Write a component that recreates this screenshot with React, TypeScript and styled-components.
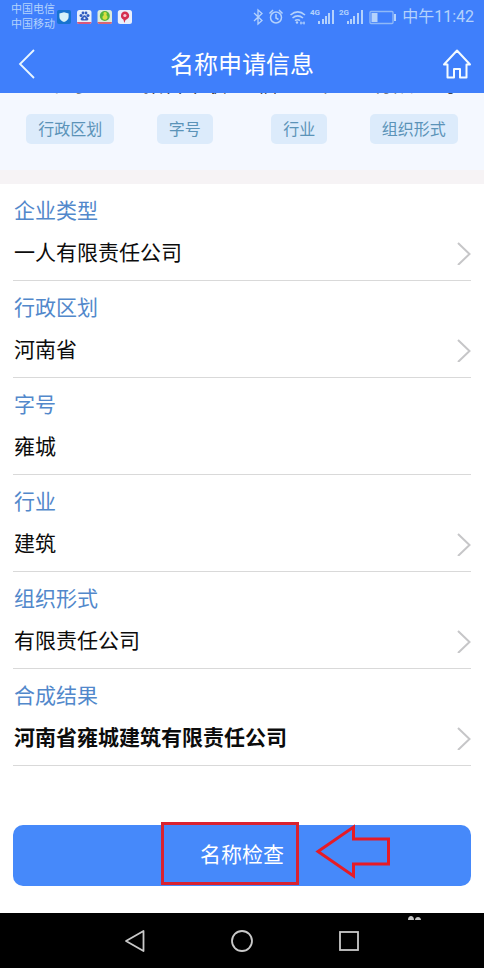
import React, { useState } from 'react';
import styled, { createGlobalStyle } from 'styled-components';

const GlobalStyle = createGlobalStyle`
  *, *::before, *::after { box-sizing: border-box; }
  body {
    margin: 0;
    background: #fff;
    font-family: Roboto, "Noto Sans CJK SC", sans-serif;
  }
  button, input {
    font: inherit;
    color: inherit;
    border: 0;
    padding: 0;
    background: none;
  }
  button { cursor: pointer; }
`;

const Page = styled.div`
  display: flex;
  flex-direction: column;
  min-height: 100vh;
  background: #fff;
`;

const Header = styled.header`
  background: #3f7ffb;
  color: #fff;
`;

const StatusBar = styled.div`
  display: flex;
  align-items: center;
  justify-content: space-between;
  height: 34px;
  padding: 0 10px 0 11px;
  color: #b4d2fc;
`;

const StatusGroup = styled.div<{ $gap: number }>`
  display: flex;
  align-items: center;
  gap: ${(p) => p.$gap}px;
`;

const Carriers = styled.div`
  font-size: 11px;
  line-height: 15px;
  margin-right: -4px;
`;

const Clock = styled.time`
  font-size: 16px;
  line-height: 24px;
  margin-left: 3px;
`;

const TitleBar = styled.div`
  display: grid;
  grid-template-columns: 32px 1fr 32px;
  align-items: center;
  height: 59px;
  padding: 0 11px;
`;

const Title = styled.h1`
  margin: 0;
  padding-top: 2px;
  font-size: 24px;
  line-height: 36px;
  font-weight: 400;
  text-align: center;
`;

const IconButton = styled.button`
  display: flex;
  align-items: center;
  justify-content: center;
  height: 40px;
`;

const Summary = styled.section`
  display: grid;
  grid-template-columns: repeat(4, 1fr);
  justify-items: center;
  row-gap: 19px;
  padding: 0 13px 26px;
  background: #f4f8ff;
  border-bottom: 14px solid #f6f3f5;
`;

const SampleWord = styled.div`
  display: flex;
  align-items: flex-end;
  height: 2px;
  overflow: hidden;
  font-size: 21px;
  line-height: 22px;
  color: #111;
  white-space: nowrap;
`;

const Chip = styled.span`
  height: 30px;
  padding: 1px 12px 0;
  border-radius: 5px;
  background: #dcebfb;
  color: #5b93b8;
  font-size: 16px;
  line-height: 30px;
`;

const Form = styled.form`
  flex: 1;
  padding: 0 13px 27px;
`;

const Field = styled.div`
  height: 97px;
  padding: 11px 0 0 1px;
  border-bottom: 1px solid #d9d9d9;
  font-size: 21px;
`;

const FieldLabel = styled.label`
  display: block;
  line-height: 32px;
  color: #5288cb;
`;

const valueStyle = `
  width: 100%;
  height: 32px;
  line-height: 32px;
  color: #0c0c0c;
  text-align: left;
`;

const ValueButton = styled.button<{ $bold?: boolean }>`
  ${valueStyle}
  display: flex;
  align-items: center;
  justify-content: space-between;
  margin-top: 10px;
  font-weight: ${(p) => (p.$bold ? 700 : 400)};
`;

const ValueInput = styled.input`
  ${valueStyle}
  display: block;
  margin-top: 10px;
  outline: none;
`;

const SubmitArea = styled.div`
  position: relative;
  margin-top: 59px;
`;

const SubmitButton = styled.button`
  display: block;
  width: 100%;
  height: 61px;
  border-radius: 10px;
  background: #4689fa;
  color: #fff;
  font-size: 21px;
  line-height: 61px;
`;

const Highlight = styled.svg`
  position: absolute;
  top: -4px;
  left: calc(50% - 82px);
  pointer-events: none;
`;

const SystemNav = styled.nav`
  position: relative;
  display: flex;
  justify-content: center;
  height: 55px;
  background: #000;
`;

const NavButton = styled.button`
  display: flex;
  align-items: center;
  justify-content: center;
  width: 107px;
`;

const Mark = styled.svg`
  position: absolute;
  top: 3px;
  right: 62px;
`;

const Chevron = () => (
  <svg width="14" height="24" viewBox="0 0 14 24" fill="none" stroke="#c6c6c8" strokeWidth="2" aria-hidden="true">
    <path d="M1 2 12.5 13 1 24" />
  </svg>
);

const AppBadges = () => (
  <svg width="76" height="16" viewBox="0 0 76 16" aria-hidden="true">
    <rect x="0" y="1" width="14" height="14" rx="2" fill="#1773cf" />
    <path d="M7 3.2 11.6 4.6V8c0 2.500-2 4-4.600 5C4.400 12 2.400 10.500 2.400 8V4.600Z" fill="#d5f2fa" />
    <rect x="20" y="1" width="14.500" height="14" rx="2.500" fill="#e7effb" />
    <g fill="#315bc0">
      <circle cx="24" cy="6.500" r="1.500" /><circle cx="26" cy="4" r="1.400" />
      <circle cx="29" cy="4" r="1.400" /><circle cx="31" cy="6.500" r="1.500" />
      <path d="M27.500 6.300c1.500 0 2 1.500 3.400 2.600 1 1 .4 2.600-1 2.600h-4.800c-1.400 0-2-1.600-1-2.600 1.400-1.100 1.900-2.600 3.400-2.600Z" />
    </g>
    <circle cx="27.500" cy="9.200" r="1" fill="#e7effb" />
    <path d="M20 13h14.500a2 2 0 0 1-2 2H22a2 2 0 0 1-2-2Z" fill="#d8577c" />
    <rect x="40.500" y="1" width="14.500" height="14" rx="2.500" fill="#dcebdc" />
    <circle cx="47.800" cy="7" r="5" fill="#55b43c" />
    <path d="M48 3c1.800 0 2.300 1.800 1.300 3 1.500.8 1.800 3.500-.3 4.500-2 .8-4-.5-3.500-2.500.2-1 .8-1.500 1.500-2C46 4.800 46.300 3 48 3Z" fill="#d9df43" />
    <path d="M40.500 13H55a2 2 0 0 1-2 2H42.500a2 2 0 0 1-2-2Z" fill="#d96473" />
    <rect x="60.800" y="1" width="14.200" height="14" rx="2.500" fill="#e9effb" />
    <path d="M67.900 2.500a4.300 4.300 0 0 1 4.300 4.300c0 2-1.700 3.600-3.700 4.100L67.300 14l-.8-3.300a4.300 4.300 0 0 1 1.400-8.200Z" fill="#d52f50" />
    <circle cx="67.900" cy="6.500" r="1.600" fill="#f3cbd9" />
  </svg>
);

const StatusIcons = () => (
  <svg width="144" height="20" viewBox="0 0 144 20" fill="none" stroke="#b4d2fc" strokeWidth="1.300" aria-hidden="true">
    <path d="M1 6 9 13.500 5 17V3l4 3.500L1 14" />
    <circle cx="23" cy="10.500" r="5.500" strokeWidth="1.500" />
    <path d="M23 7v4l2.500 1.500M16.500 6.500l3.500-3.500M29.500 6.500l-3.500-3.500" strokeWidth="1.500" />
    <path d="M37.500 8c4.500-3.800 10-3.800 14.500 0M39.500 11c3.300-2.700 7.200-2.700 10.500 0M42 13.700c1.600-1.200 3.500-1.200 5 0" strokeWidth="1.600" />
    <circle cx="44" cy="15.500" r="1.200" fill="#b4d2fc" stroke="none" />
    <path d="M47 16h5M48 14.500v3M51 14.500v3" strokeWidth="1" />
    <g fill="#b4d2fc" stroke="none" fontFamily="Roboto, sans-serif" fontSize="8" fontWeight="700">
      <text x="57" y="8">4G</text>
      <text x="86" y="8">2G</text>
      <rect x="65" y="14" width="2" height="3" /><rect x="69" y="12" width="2" height="5" />
      <rect x="72" y="9" width="2" height="8" /><rect x="75" y="6" width="2" height="11" />
      <rect x="79" y="3" width="2" height="14" />
      <rect x="94" y="14" width="2" height="3" /><rect x="97" y="12" width="2" height="5" />
      <rect x="100" y="9" width="2" height="8" /><rect x="104" y="6" width="2" height="11" />
      <rect x="108" y="3" width="2" height="14" />
      <rect x="118.500" y="6" width="6" height="9" /><rect x="141" y="7" width="2" height="7" />
    </g>
    <rect x="117" y="4.500" width="23" height="12" rx="1" stroke="#8fb9f7" />
  </svg>
);

const samples = [
  { word: '北京', part: '行政区划' },
  { word: '拓普华联', part: '字号' },
  { word: '信息工程', part: '行业' },
  { word: '有限公司', part: '组织形式' },
];

type FieldData = { id: string; label: string; value: string; editable?: boolean; bold?: boolean };

const fields: FieldData[] = [
  { id: 'type', label: '企业类型', value: '一人有限责任公司' },
  { id: 'region', label: '行政区划', value: '河南省' },
  { id: 'name', label: '字号', value: '雍城', editable: true },
  { id: 'industry', label: '行业', value: '建筑' },
  { id: 'form', label: '组织形式', value: '有限责任公司' },
  { id: 'result', label: '合成结果', value: '河南省雍城建筑有限责任公司', bold: true },
];

export default function App() {
  const [name, setName] = useState('雍城');
  return (
    <Page>
      <GlobalStyle />
      <Header>
        <StatusBar>
          <StatusGroup $gap={6}>
            <Carriers>
              <div>中国电信</div>
              <div>中国移动</div>
            </Carriers>
            <AppBadges />
          </StatusGroup>
          <StatusGroup $gap={2}>
            <StatusIcons />
            <Clock>中午11:42</Clock>
          </StatusGroup>
        </StatusBar>
        <TitleBar>
          <IconButton type="button" aria-label="返回">
            <svg width="32" height="32" viewBox="0 0 32 32" fill="none" stroke="#e9f6ff" strokeWidth="1.800">
              <path d="M23 2 9 16l14 14" />
            </svg>
          </IconButton>
          <Title>名称申请信息</Title>
          <IconButton type="button" aria-label="首页">
            <svg width="32" height="32" viewBox="0 0 32 32" fill="none" stroke="#f4fbff" strokeWidth="2" strokeLinejoin="round">
              <path d="M16 2.500 3 16.500h3.500V29.500H13V21h6v8.500h6.500v-13H29Z" />
            </svg>
          </IconButton>
        </TitleBar>
      </Header>
      <Summary>
        {samples.map((s) => <SampleWord key={s.word}>{s.word}</SampleWord>)}
        {samples.map((s) => <Chip key={s.part}>{s.part}</Chip>)}
      </Summary>
      <Form onSubmit={(e) => e.preventDefault()}>
        {fields.map((f) => (
          <Field key={f.id}>
            <FieldLabel htmlFor={f.id}>{f.label}</FieldLabel>
            {f.editable ? (
              <ValueInput id={f.id} type="text" value={name} onChange={(e) => setName(e.target.value)} />
            ) : (
              <ValueButton id={f.id} type="button" $bold={f.bold}>
                {f.value}
                <Chevron />
              </ValueButton>
            )}
          </Field>
        ))}
        <SubmitArea>
          <SubmitButton type="submit">名称检查</SubmitButton>
          <Highlight width="232" height="64" viewBox="0 0 232 64" fill="none" stroke="#d9222f" strokeWidth="3" aria-hidden="true">
            <rect x="2.500" y="2.500" width="135" height="60" />
            <path d="M158 30.500 193.500 6v12H228.500v25H193.500v12Z" stroke="#e61b26" />
          </Highlight>
        </SubmitArea>
      </Form>
      <SystemNav aria-label="系统导航">
        <NavButton type="button" aria-label="后退">
          <svg width="24" height="24" viewBox="0 0 24 24" fill="none" stroke="#c9c9c9" strokeWidth="1.800" strokeLinejoin="round">
            <path d="M3 12 20.500 2v20Z" />
          </svg>
        </NavButton>
        <NavButton type="button" aria-label="主屏幕">
          <svg width="24" height="24" viewBox="0 0 24 24" fill="none" stroke="#c9c9c9" strokeWidth="1.800">
            <circle cx="12" cy="12" r="10" />
          </svg>
        </NavButton>
        <NavButton type="button" aria-label="最近任务">
          <svg width="24" height="24" viewBox="0 0 24 24" fill="none" stroke="#c9c9c9" strokeWidth="1.800">
            <rect x="3" y="3" width="18" height="18" />
          </svg>
        </NavButton>
        <Mark width="15" height="4" viewBox="0 0 15 4" fill="#c4c4c4" aria-hidden="true">
          <path d="M1 4C1 1 2.500 0 4 0s3 1 3 4ZM8 4c0-2 1.500-3 3-3s3 1 3 3Z" />
        </Mark>
      </SystemNav>
    </Page>
  );
}
